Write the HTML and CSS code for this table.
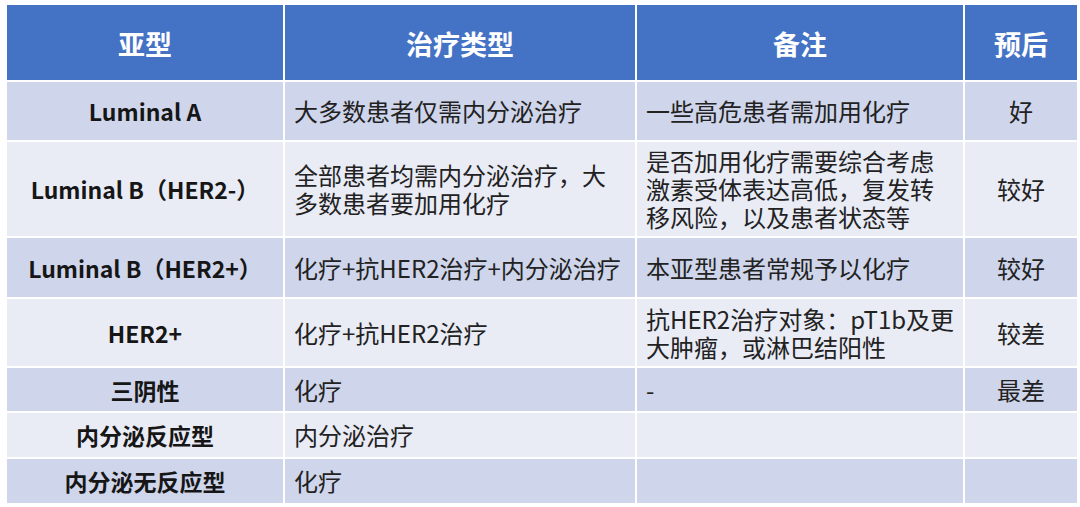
FILE: index.html
```html
<!DOCTYPE html>
<html lang="zh-CN">
<head>
<meta charset="utf-8">
<title>乳腺癌分子分型与治疗</title>
<link rel="stylesheet" href="styles.css">
</head>
<body>
<div class="grid">
  <div class="cell head">亚型</div>
  <div class="cell head">治疗类型</div>
  <div class="cell head">备注</div>
  <div class="cell head">预后</div>

  <div class="cell odd sub">Luminal A</div>
  <div class="cell odd txt">大多数患者仅需内分泌治疗</div>
  <div class="cell odd txt">一些高危患者需加用化疗</div>
  <div class="cell odd prog">好</div>

  <div class="cell even sub">Luminal B（HER2-）</div>
  <div class="cell even txt">全部患者均需内分泌治疗，大<br>多数患者要加用化疗</div>
  <div class="cell even txt">是否加用化疗需要综合考虑<br>激素受体表达高低，复发转<br>移风险，以及患者状态等</div>
  <div class="cell even prog">较好</div>

  <div class="cell odd sub">Luminal B（HER2+）</div>
  <div class="cell odd txt">化疗+抗HER2治疗+内分泌治疗</div>
  <div class="cell odd txt">本亚型患者常规予以化疗</div>
  <div class="cell odd prog">较好</div>

  <div class="cell even sub">HER2+</div>
  <div class="cell even txt">化疗+抗HER2治疗</div>
  <div class="cell even txt">抗HER2治疗对象：pT1b及更<br>大肿瘤，或淋巴结阳性</div>
  <div class="cell even prog">较差</div>

  <div class="cell odd sub">三阴性</div>
  <div class="cell odd txt">化疗</div>
  <div class="cell odd txt">-</div>
  <div class="cell odd prog">最差</div>

  <div class="cell even sub">内分泌反应型</div>
  <div class="cell even txt">内分泌治疗</div>
  <div class="cell even txt"></div>
  <div class="cell even prog"></div>

  <div class="cell odd sub">内分泌无反应型</div>
  <div class="cell odd txt">化疗</div>
  <div class="cell odd txt"></div>
  <div class="cell odd prog"></div>
</div>
</body>
</html>
```

FILE: styles.css
```css
html, body {
  margin: 0;
  padding: 0;
  background: #ffffff;
}

body {
  padding: 5px 0 0 7px;
  font-family: "Noto Sans CJK SC", "Noto Sans", sans-serif;
  color: #222222;
}

.grid {
  display: grid;
  grid-template-columns: 276px 350px 326px 112px;
  grid-template-rows: 75px 58px 94px 59px 67px 43px 44px 44px;
  gap: 2px;
  width: max-content;
  background: #ffffff;
}

.cell {
  display: flex;
  align-items: center;
  box-sizing: border-box;
  padding: 0 9px;
  font-size: 24px;
  line-height: 28px;
  white-space: nowrap;
}

.head {
  background: #4472c4;
  color: #ffffff;
  font-weight: 700;
  font-size: 27px;
  justify-content: center;
  padding-top: 2px;
}

.odd {
  background: #cfd5ea;
}

.even {
  background: #e9ebf5;
}

.sub {
  justify-content: center;
  font-weight: 700;
  font-size: 23px;
  color: #161616;
}

.txt {
  justify-content: flex-start;
}

.prog {
  justify-content: center;
}
```
